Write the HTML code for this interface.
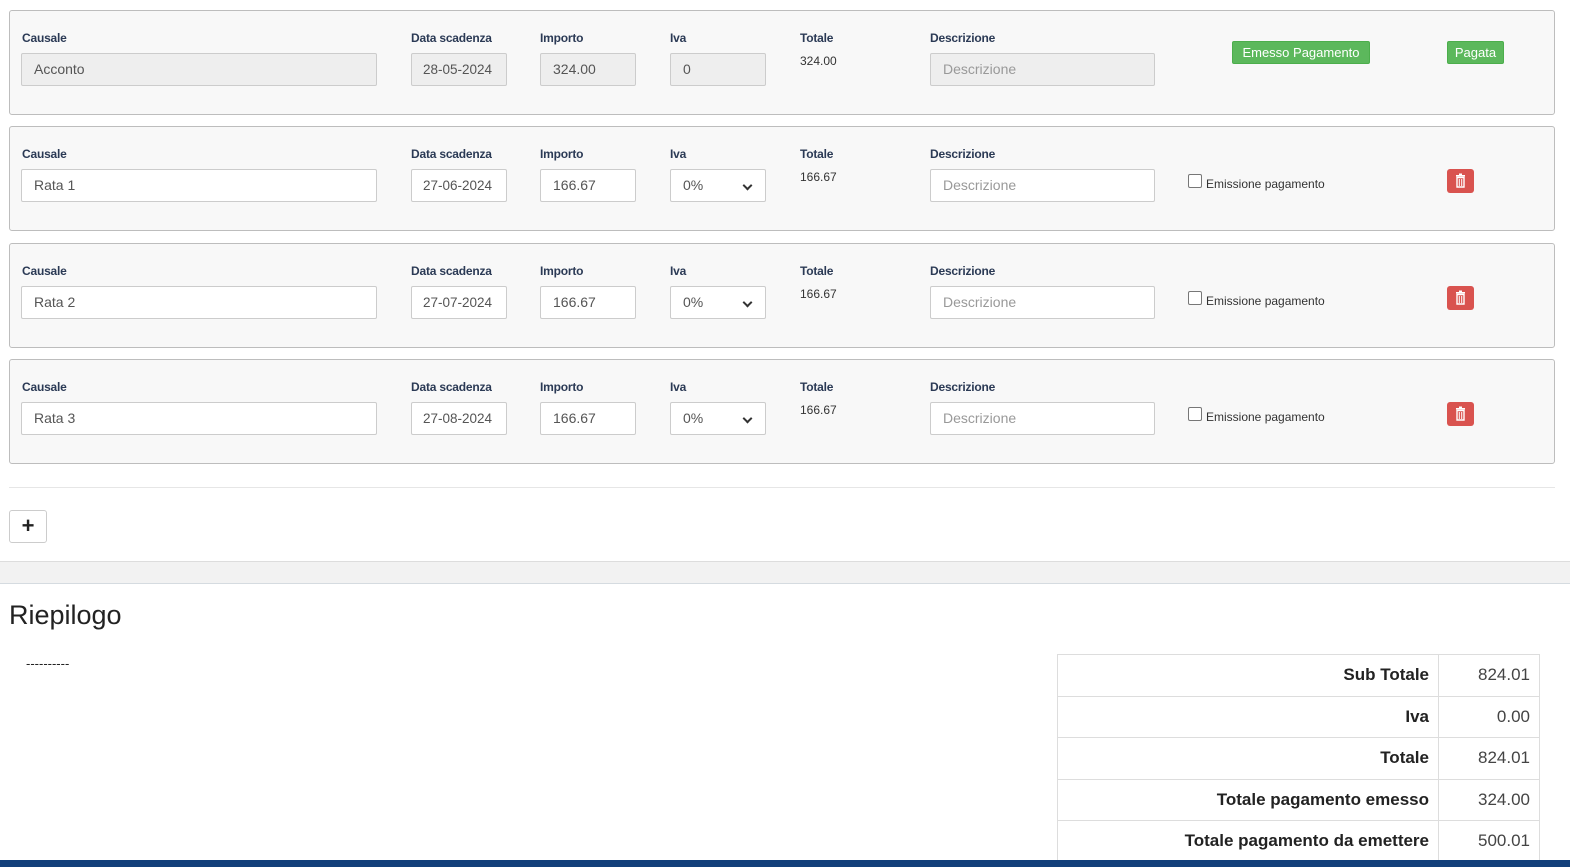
<!DOCTYPE html>
<html><head><meta charset="utf-8"><style>
*{box-sizing:border-box;margin:0;padding:0}
body{width:1570px;height:867px;background:#fff;font-family:"Liberation Sans",sans-serif;position:relative;overflow:hidden;color:#333}
.p{position:absolute;left:9px;width:1546px;height:105px;background:#f8f8f8;border:1px solid #bdbdbd;border-radius:3px}
.l{position:absolute;top:20px;font-size:12px;font-weight:bold;color:#2b3a55;letter-spacing:-0.2px;white-space:nowrap}
.i{position:absolute;top:42px;height:33px;background:#fff;border:1px solid #ccc;border-radius:2px;font-size:14px;color:#555;padding:0 12px;line-height:31px;white-space:nowrap;overflow:hidden}
.dt{padding:0 11px;font-size:13.5px}
.d{background:#eee}
.ph{color:#999}
.t{position:absolute;top:43px;left:790px;font-size:12px;color:#333}
.sel:after{content:"";position:absolute;right:14px;top:12px;width:5px;height:5px;border-right:2px solid #333;border-bottom:2px solid #333;transform:rotate(45deg)}
.badge{position:absolute;top:30px;height:23px;background:#5cb85c;color:#fff;font-size:13px;border-radius:2px;line-height:21px;text-align:center;border:1px solid #4cae4c;white-space:nowrap}
.cb{position:absolute;left:1178px;top:47px;width:14px;height:14px;border:1px solid #777;border-radius:2px;background:#fff}
.cbl{position:absolute;left:1196px;top:50px;font-size:12px;color:#333}
.tr{position:absolute;left:1437px;top:42px;width:27px;height:24px;background:#d9534f;border-radius:3px}
table{position:absolute;left:1057px;top:654px;border-collapse:collapse;width:481px}
td{border:1px solid #ddd;height:41.5px;font-size:17px;padding:0 9px;text-align:right}
td:first-child{font-weight:bold;color:#222;width:381px}
td:last-child{color:#444}
</style></head><body>

<div class="p" style="top:10px">
<div class="l" style="left:12px">Causale</div><div class="l" style="left:401px">Data scadenza</div><div class="l" style="left:530px">Importo</div><div class="l" style="left:660px">Iva</div><div class="l" style="left:790px">Totale</div><div class="l" style="left:920px">Descrizione</div>
<div class="i d" style="left:11px;width:356px">Acconto</div>
<div class="i d dt" style="left:401px;width:96px">28-05-2024</div>
<div class="i d" style="left:530px;width:96px">324.00</div>
<div class="i d" style="left:660px;width:96px">0</div>
<div class="t">324.00</div>
<div class="i d ph" style="left:920px;width:225px">Descrizione</div>
<div class="badge" style="left:1222px;width:138px">Emesso Pagamento</div>
<div class="badge" style="left:1437px;width:57px">Pagata</div>
</div>

<div class="p" style="top:126px">
<div class="l" style="left:12px">Causale</div><div class="l" style="left:401px">Data scadenza</div><div class="l" style="left:530px">Importo</div><div class="l" style="left:660px">Iva</div><div class="l" style="left:790px">Totale</div><div class="l" style="left:920px">Descrizione</div>
<div class="i" style="left:11px;width:356px">Rata 1</div>
<div class="i dt" style="left:401px;width:96px">27-06-2024</div>
<div class="i" style="left:530px;width:96px">166.67</div>
<div class="i sel" style="left:660px;width:96px">0%</div>
<div class="t">166.67</div>
<div class="i ph" style="left:920px;width:225px">Descrizione</div>
<div class="cb"></div><div class="cbl">Emissione pagamento</div>
<div class="tr"><svg width="27" height="24" viewBox="0 0 27 24"><rect x="9" y="6" width="9" height="1.6" fill="#fff"/><rect x="12" y="4.5" width="3" height="2" fill="#fff"/><path d="M10 8.5h7v9.5h-7z" fill="none" stroke="#fff" stroke-width="1.4"/><path d="M12.3 10v7M14.7 10v7" stroke="#fff" stroke-width="1"/></svg></div>
</div>

<div class="p" style="top:243px">
<div class="l" style="left:12px">Causale</div><div class="l" style="left:401px">Data scadenza</div><div class="l" style="left:530px">Importo</div><div class="l" style="left:660px">Iva</div><div class="l" style="left:790px">Totale</div><div class="l" style="left:920px">Descrizione</div>
<div class="i" style="left:11px;width:356px">Rata 2</div>
<div class="i dt" style="left:401px;width:96px">27-07-2024</div>
<div class="i" style="left:530px;width:96px">166.67</div>
<div class="i sel" style="left:660px;width:96px">0%</div>
<div class="t">166.67</div>
<div class="i ph" style="left:920px;width:225px">Descrizione</div>
<div class="cb"></div><div class="cbl">Emissione pagamento</div>
<div class="tr"><svg width="27" height="24" viewBox="0 0 27 24"><rect x="9" y="6" width="9" height="1.6" fill="#fff"/><rect x="12" y="4.5" width="3" height="2" fill="#fff"/><path d="M10 8.5h7v9.5h-7z" fill="none" stroke="#fff" stroke-width="1.4"/><path d="M12.3 10v7M14.7 10v7" stroke="#fff" stroke-width="1"/></svg></div>
</div>

<div class="p" style="top:359px">
<div class="l" style="left:12px">Causale</div><div class="l" style="left:401px">Data scadenza</div><div class="l" style="left:530px">Importo</div><div class="l" style="left:660px">Iva</div><div class="l" style="left:790px">Totale</div><div class="l" style="left:920px">Descrizione</div>
<div class="i" style="left:11px;width:356px">Rata 3</div>
<div class="i dt" style="left:401px;width:96px">27-08-2024</div>
<div class="i" style="left:530px;width:96px">166.67</div>
<div class="i sel" style="left:660px;width:96px">0%</div>
<div class="t">166.67</div>
<div class="i ph" style="left:920px;width:225px">Descrizione</div>
<div class="cb"></div><div class="cbl">Emissione pagamento</div>
<div class="tr"><svg width="27" height="24" viewBox="0 0 27 24"><rect x="9" y="6" width="9" height="1.6" fill="#fff"/><rect x="12" y="4.5" width="3" height="2" fill="#fff"/><path d="M10 8.5h7v9.5h-7z" fill="none" stroke="#fff" stroke-width="1.4"/><path d="M12.3 10v7M14.7 10v7" stroke="#fff" stroke-width="1"/></svg></div>
</div>

<div style="position:absolute;left:9px;top:487px;width:1546px;border-top:1px solid #e6e6e6"></div>
<div style="position:absolute;left:9px;top:510px;width:38px;height:33px;border:1px solid #ccc;border-radius:3px;background:#fff;text-align:center;font-size:22px;font-weight:bold;line-height:30px;color:#222">+</div>
<div style="position:absolute;left:0;top:561px;width:1570px;height:23px;background:#f2f2f2;border-top:1px solid #ddd;border-bottom:1px solid #d5dbe0"></div>
<div style="position:absolute;left:9px;top:600px;font-size:27px;color:#222">Riepilogo</div>
<div style="position:absolute;left:26px;top:656px;font-size:13px;color:#222">----------</div>

<table style="width:483px">
<tr><td>Sub Totale</td><td>824.01</td></tr>
<tr><td>Iva</td><td>0.00</td></tr>
<tr><td>Totale</td><td>824.01</td></tr>
<tr><td>Totale pagamento emesso</td><td>324.00</td></tr>
<tr><td>Totale pagamento da emettere</td><td>500.01</td></tr>
</table>
<div style="position:absolute;left:0;top:860px;width:1570px;height:7px;background:#123f7a"></div>
</body></html>
